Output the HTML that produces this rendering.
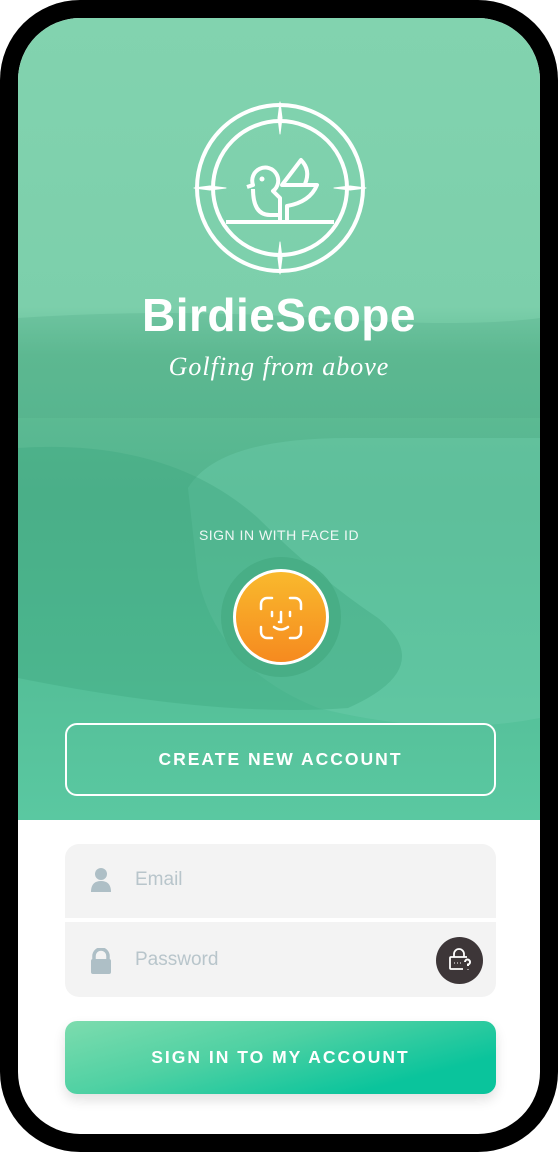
<!DOCTYPE html>
<html><head><meta charset="utf-8"><style>
*{margin:0;padding:0;box-sizing:border-box}
body{width:558px;height:1152px;background:#fff;font-family:"Liberation Sans",sans-serif;overflow:hidden}
.frame{position:absolute;left:0;top:0;width:558px;height:1152px;background:#000;border-radius:80px}
.screen{position:absolute;left:18px;top:18px;width:522px;height:1116px;background:#fff;border-radius:62px;overflow:hidden}
.hero{position:absolute;left:0;top:0;width:522px;height:802px;background:linear-gradient(180deg,#82d3af 0%,#7ccfab 36%,#63be96 42%,#52b48e 60%,#54be97 80%,#5ac8a1 100%)}
.t{position:absolute;color:#fff;text-align:center;width:522px;left:0}
.btn{position:absolute;left:47px;width:431px;height:73px;border-radius:12px;color:#fff;font-weight:bold;font-size:17.5px;letter-spacing:2px;text-align:center;line-height:73px}
</style></head><body>
<div class="frame"></div>
<div class="screen">
 <div class="hero">
  <svg width="522" height="802" style="position:absolute;left:0;top:0">
   <path d="M0 300 Q150 290 300 300 T522 300 L522 400 L0 400Z" fill="#4aa985" opacity=".25"/>
   <path d="M170 470 Q200 420 330 420 L522 420 L522 700 Q420 720 300 690 Q200 650 180 560Z" fill="#6cccaa" opacity=".45"/>
   <path d="M0 430 Q150 420 240 500 Q300 560 360 600 Q420 650 330 690 Q200 700 0 660Z" fill="#3fa880" opacity=".4"/>
  </svg>
  <svg width="180" height="180" style="position:absolute;left:172px;top:80px" fill="none" stroke="#fff" stroke-width="4" stroke-linejoin="round">
   <circle cx="90" cy="90" r="83"/>
   <circle cx="90" cy="90" r="67"/>
   <path d="M90 4L92 20L90 36L88 20ZM90 144L92 160L90 176L88 160ZM4 90L20 88L36 90L20 92ZM144 90L160 88L176 90L160 92Z" fill="#fff" stroke-width="1"/>
   <path d="M36 124h108"/>
   <path d="M57 89L63 87A13 13 0 1 1 83 93L90 100L90 124"/>
   <path d="M63 91Q63 117 80 117L90 117"/>
   <path d="M97 124L97 108Q120 104 127 87L92 87L111 62Q121 72 115 86"/>
   <circle cx="72" cy="81" r="2.5" fill="#fff" stroke="none"/>
  </svg>
  <div class="t" style="top:270px;font-size:46px;font-weight:bold;letter-spacing:0.5px">BirdieScope</div>
  <div class="t" style="top:334px;font-size:26px;font-family:'Liberation Serif',serif;font-style:italic;letter-spacing:1px">Golfing from above</div>
  <div class="t" style="top:509px;font-size:14px;letter-spacing:.5px;opacity:.9">SIGN IN WITH FACE ID</div>
  <div style="position:absolute;left:203px;top:539px;width:120px;height:120px;border-radius:50%;background:#46ab83;opacity:.8"></div>
  <div style="position:absolute;left:215px;top:551px;width:96px;height:96px;border-radius:50%;background:linear-gradient(#f9b92d,#f68a1f);border:3px solid #fff"></div>
  <svg width="44" height="44" style="position:absolute;left:241px;top:578px" fill="none" stroke="#fff" stroke-width="2.5" stroke-linecap="round">
   <path d="M2 13V8a6 6 0 0 1 6-6h5M31 2h5a6 6 0 0 1 6 6v5M42 31v5a6 6 0 0 1-6 6h-5M13 42H8a6 6 0 0 1-6-6v-5"/>
   <path d="M13 16v4M31 16v4M22 16v10h-2M15 31q7 5 14 0"/>
  </svg>
  <div class="btn" style="top:705px;border:2px solid #fff;line-height:69px">CREATE NEW ACCOUNT</div>
 </div>
 <div style="position:absolute;left:47px;top:826px;width:431px;height:153px;border-radius:14px;background:#f3f3f3;overflow:hidden">
  <div style="position:absolute;left:0;top:74px;width:431px;height:4px;background:#fff"></div>
  <svg width="24" height="26" style="position:absolute;left:24px;top:24px" fill="#aebfc6"><circle cx="12" cy="6" r="6"/><path d="M2 24q0-11 10-11t10 11z"/></svg>
  <div style="position:absolute;left:70px;top:25px;font-size:19px;color:#b8c5cb">Email</div>
  <svg width="22" height="26" style="position:absolute;left:25px;top:104px" fill="#aebfc6"><path d="M4 12V8a7 7 0 0 1 14 0v4" fill="none" stroke="#aebfc6" stroke-width="3.5"/><rect x="1" y="11" width="20" height="15" rx="2"/></svg>
  <div style="position:absolute;left:70px;top:105px;font-size:19px;color:#b8c5cb">Password</div>
  <div style="position:absolute;left:371px;top:93px;width:47px;height:47px;border-radius:50%;background:#3d3638"></div>
  <svg width="24" height="24" style="position:absolute;left:383px;top:104px" fill="none" stroke="#fff" stroke-width="1.8"><path d="M6 9V6a5 5 0 0 1 10 0v3"/><path d="M15 21H3a1 1 0 0 1-1-1V10a1 1 0 0 1 1-1h16"/><path d="M6 15h.5M9 15h.5M12 15h.5" stroke-width="2"/><path d="M17 14a2.5 2.5 0 1 1 3 2.5v1.5M20 21v.5" stroke-width="2"/></svg>
 </div>
 <div class="btn" style="top:1003px;background:linear-gradient(165deg,#7ddcae 0%,#4fd1a3 40%,#0ac49c 80%);box-shadow:0 6px 12px rgba(0,0,0,.12)">SIGN IN TO MY ACCOUNT</div>
</div>
</body></html>
